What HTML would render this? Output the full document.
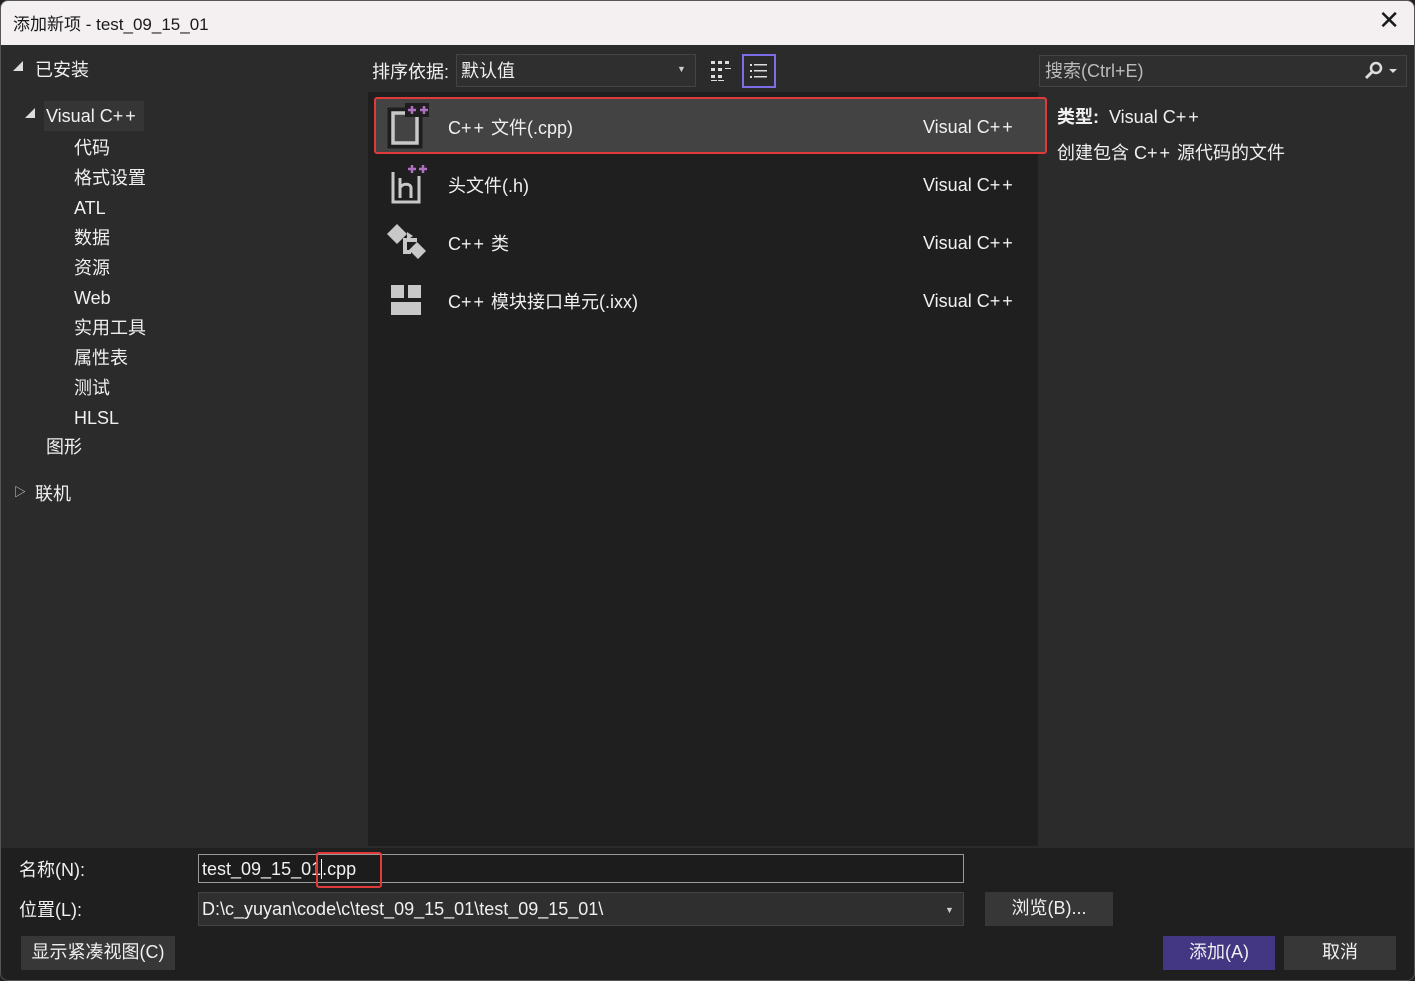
<!DOCTYPE html>
<html><head><meta charset="utf-8"><style>
*{margin:0;padding:0;box-sizing:border-box}
body{width:1415px;height:981px;background:#202020;font-family:"Liberation Sans","Noto Sans CJK SC",sans-serif;color:#f0f0f0;position:relative;overflow:hidden;font-size:18px}
.win{position:absolute;left:0;top:0;width:1415px;height:981px;border:1px solid #555;border-radius:8px;overflow:hidden;background:#2b2b2b}
.title{position:absolute;left:0;top:0;width:100%;height:44px;background:#f4eff0;color:#1a1a1a;font-size:17px;padding:9px 0 0 12px}
.t{position:absolute;white-space:nowrap;margin-top:-3px;margin-left:-1px}
.l{margin-top:0}
.pp{letter-spacing:2px}
.list{position:absolute;left:367px;top:91px;width:670px;height:754px;background:#1f1f1f}
.bottom{position:absolute;left:0;top:847px;width:100%;height:135px;background:#1f1f1f}
.box{position:absolute;border:1px solid #444;background:#2f2f2f}
.btn{position:absolute;background:#373737;text-align:center;font-size:18px;line-height:33px}
</style></head><body><div class="win">
<div class="title">添加新项 - test_09_15_01<span style="position:absolute;right:14px;top:4px;font-size:26px;font-weight:300">✕</span></div>

<div class="t" style="left:13px;top:60px;font-size:10px;color:#ddd">◢</div>
<div class="t" style="left:35px;top:58px">已安装</div>
<div style="position:absolute;left:43px;top:100px;width:100px;height:30px;background:#353535"></div>
<div class="t" style="left:25px;top:107px;font-size:10px;color:#ddd">◢</div>
<div class="t l" style="left:46px;top:105px">Visual C<span class="pp">++</span></div>
<div class="t" style="left:74px;top:135px;line-height:30px">代码<br>格式设置<br>ATL<br>数据<br>资源<br>Web<br>实用工具<br>属性表<br>测试<br>HLSL</div>
<div class="t" style="left:46px;top:435px">图形</div>
<div class="t" style="left:14px;top:485px;font-size:12px;color:#ddd">▷</div>
<div class="t" style="left:35px;top:482px">联机</div>

<div class="t" style="left:372px;top:60px">排序依据:</div>
<div class="box" style="left:455px;top:53px;width:240px;height:33px"></div>
<div class="t" style="left:461px;top:59px">默认值</div>
<div class="t" style="left:677px;top:66px;font-size:9px;color:#ccc">▼</div>
<svg style="position:absolute;left:709px;top:58px" width="24" height="24" fill="#ddd"><rect x="1" y="2" width="4" height="3"/><rect x="8" y="2" width="4" height="3"/><rect x="15" y="2" width="4" height="3"/><rect x="1" y="9" width="4" height="3"/><rect x="8" y="9" width="4" height="3"/><rect x="15" y="9" width="6" height="1"/><rect x="1" y="16" width="4" height="3"/><rect x="8" y="16" width="4" height="3"/><rect x="1" y="21" width="6" height="1"/><rect x="8" y="21" width="6" height="1"/></svg>
<div style="position:absolute;left:741px;top:53px;width:34px;height:34px;border:2px solid #7b6ee8"></div>
<svg style="position:absolute;left:748px;top:60px" width="20" height="20" fill="#ddd"><rect x="1" y="3" width="2" height="2"/><rect x="5" y="3" width="13" height="1.5"/><rect x="1" y="9" width="2" height="2"/><rect x="5" y="9" width="13" height="1.5"/><rect x="1" y="15" width="2" height="2"/><rect x="5" y="15" width="13" height="1.5"/></svg>

<div class="list"></div>
<div style="position:absolute;left:373px;top:96px;width:673px;height:57px;background:#434343;border:2px solid #e03a3a;border-radius:3px"></div>
<svg style="position:absolute;left:386px;top:102px" width="46" height="46"><rect x="4" y="8" width="28" height="34" fill="none" stroke="#1e1e1e" stroke-width="7"/><rect x="6" y="10" width="24" height="30" fill="none" stroke="#c8c8c8" stroke-width="3.5"/><rect x="18" y="0" width="24" height="14" fill="#1e1e1e"/><path d="M25 3v8M21 7h8M37 3v8M33 7h8" stroke="#b070c0" stroke-width="2.5"/></svg>
<div class="t" style="left:448px;top:116px">C<span class="pp">++</span> 文件(.cpp)</div><div class="t l" style="left:923px;top:116px">Visual C<span class="pp">++</span></div>
<svg style="position:absolute;left:386px;top:161px" width="46" height="46"><path d="M6 10v30h26V14" fill="none" stroke="#c8c8c8" stroke-width="3"/><path d="M13 16v20M13 26c2-5 11-5 11 0v10" fill="none" stroke="#c8c8c8" stroke-width="3"/><path d="M25 3v8M21 7h8M36 3v8M32 7h8" stroke="#b070c0" stroke-width="2.5"/></svg>
<div class="t" style="left:448px;top:174px">头文件(.h)</div><div class="t l" style="left:923px;top:174px">Visual C<span class="pp">++</span></div>
<svg style="position:absolute;left:384px;top:219px" width="46" height="46" fill="#c8c8c8"><path d="M2 14L12 4l10 10-10 10z"/><path d="M22 12l6 4-6 4zM24 30l8-8 9 9-8 8z"/><path d="M18 18h14v4h-10v8h4v4h-8z"/></svg>
<div class="t" style="left:448px;top:232px">C<span class="pp">++</span> 类</div><div class="t l" style="left:923px;top:232px">Visual C<span class="pp">++</span></div>
<svg style="position:absolute;left:390px;top:284px" width="32" height="32" fill="#c8c8c8"><rect x="0" y="0" width="13" height="13"/><rect x="17" y="0" width="13" height="13"/><rect x="0" y="17" width="30" height="13"/></svg>
<div class="t" style="left:448px;top:290px">C<span class="pp">++</span> 模块接口单元(.ixx)</div><div class="t l" style="left:923px;top:290px">Visual C<span class="pp">++</span></div>

<div class="box" style="left:1038px;top:54px;width:368px;height:32px"></div>
<div class="t" style="left:1045px;top:59px;color:#bbb">搜索(Ctrl+E)</div>
<svg style="position:absolute;left:1362px;top:59px" width="40" height="20"><circle cx="13" cy="8" r="5" fill="none" stroke="#ddd" stroke-width="2.5"/><path d="M9 12L3 18" stroke="#ddd" stroke-width="3"/><path d="M26 9h8l-4 4z" fill="#ddd"/></svg>
<div class="t" style="left:1057px;top:105px"><b>类型:</b>&nbsp; Visual C<span class="pp">++</span></div>
<div class="t" style="left:1057px;top:141px">创建包含 C<span class="pp">++</span> 源代码的文件</div>

<div class="bottom"></div>
<div class="t" style="left:19px;top:858px">名称(N):</div>
<div style="position:absolute;left:197px;top:853px;width:766px;height:29px;border:1px solid #9a9a9a;background:#1c1c1c"></div>
<div class="t l" style="left:202px;top:858px">test_09_15_01<span style="border-left:1px solid #fff"></span>.cpp</div>
<div style="position:absolute;left:315px;top:851px;width:66px;height:36px;border:2px solid #e03a3a;border-radius:3px"></div>
<div class="t" style="left:19px;top:898px">位置(L):</div>
<div class="box" style="left:197px;top:891px;width:766px;height:34px"></div>
<div class="t l" style="left:202px;top:898px">D:\c_yuyan\code\c\test_09_15_01\test_09_15_01\</div>
<div class="t" style="left:945px;top:907px;font-size:9px;color:#ccc">▼</div>
<div class="btn" style="left:984px;top:891px;width:128px;height:34px">浏览(B)...</div>
<div class="btn" style="left:20px;top:935px;width:154px;height:34px">显示紧凑视图(C)</div>
<div class="btn" style="left:1162px;top:935px;width:112px;height:34px;background:#433683">添加(A)</div>
<div class="btn" style="left:1283px;top:935px;width:112px;height:34px">取消</div>
</div></body></html>
